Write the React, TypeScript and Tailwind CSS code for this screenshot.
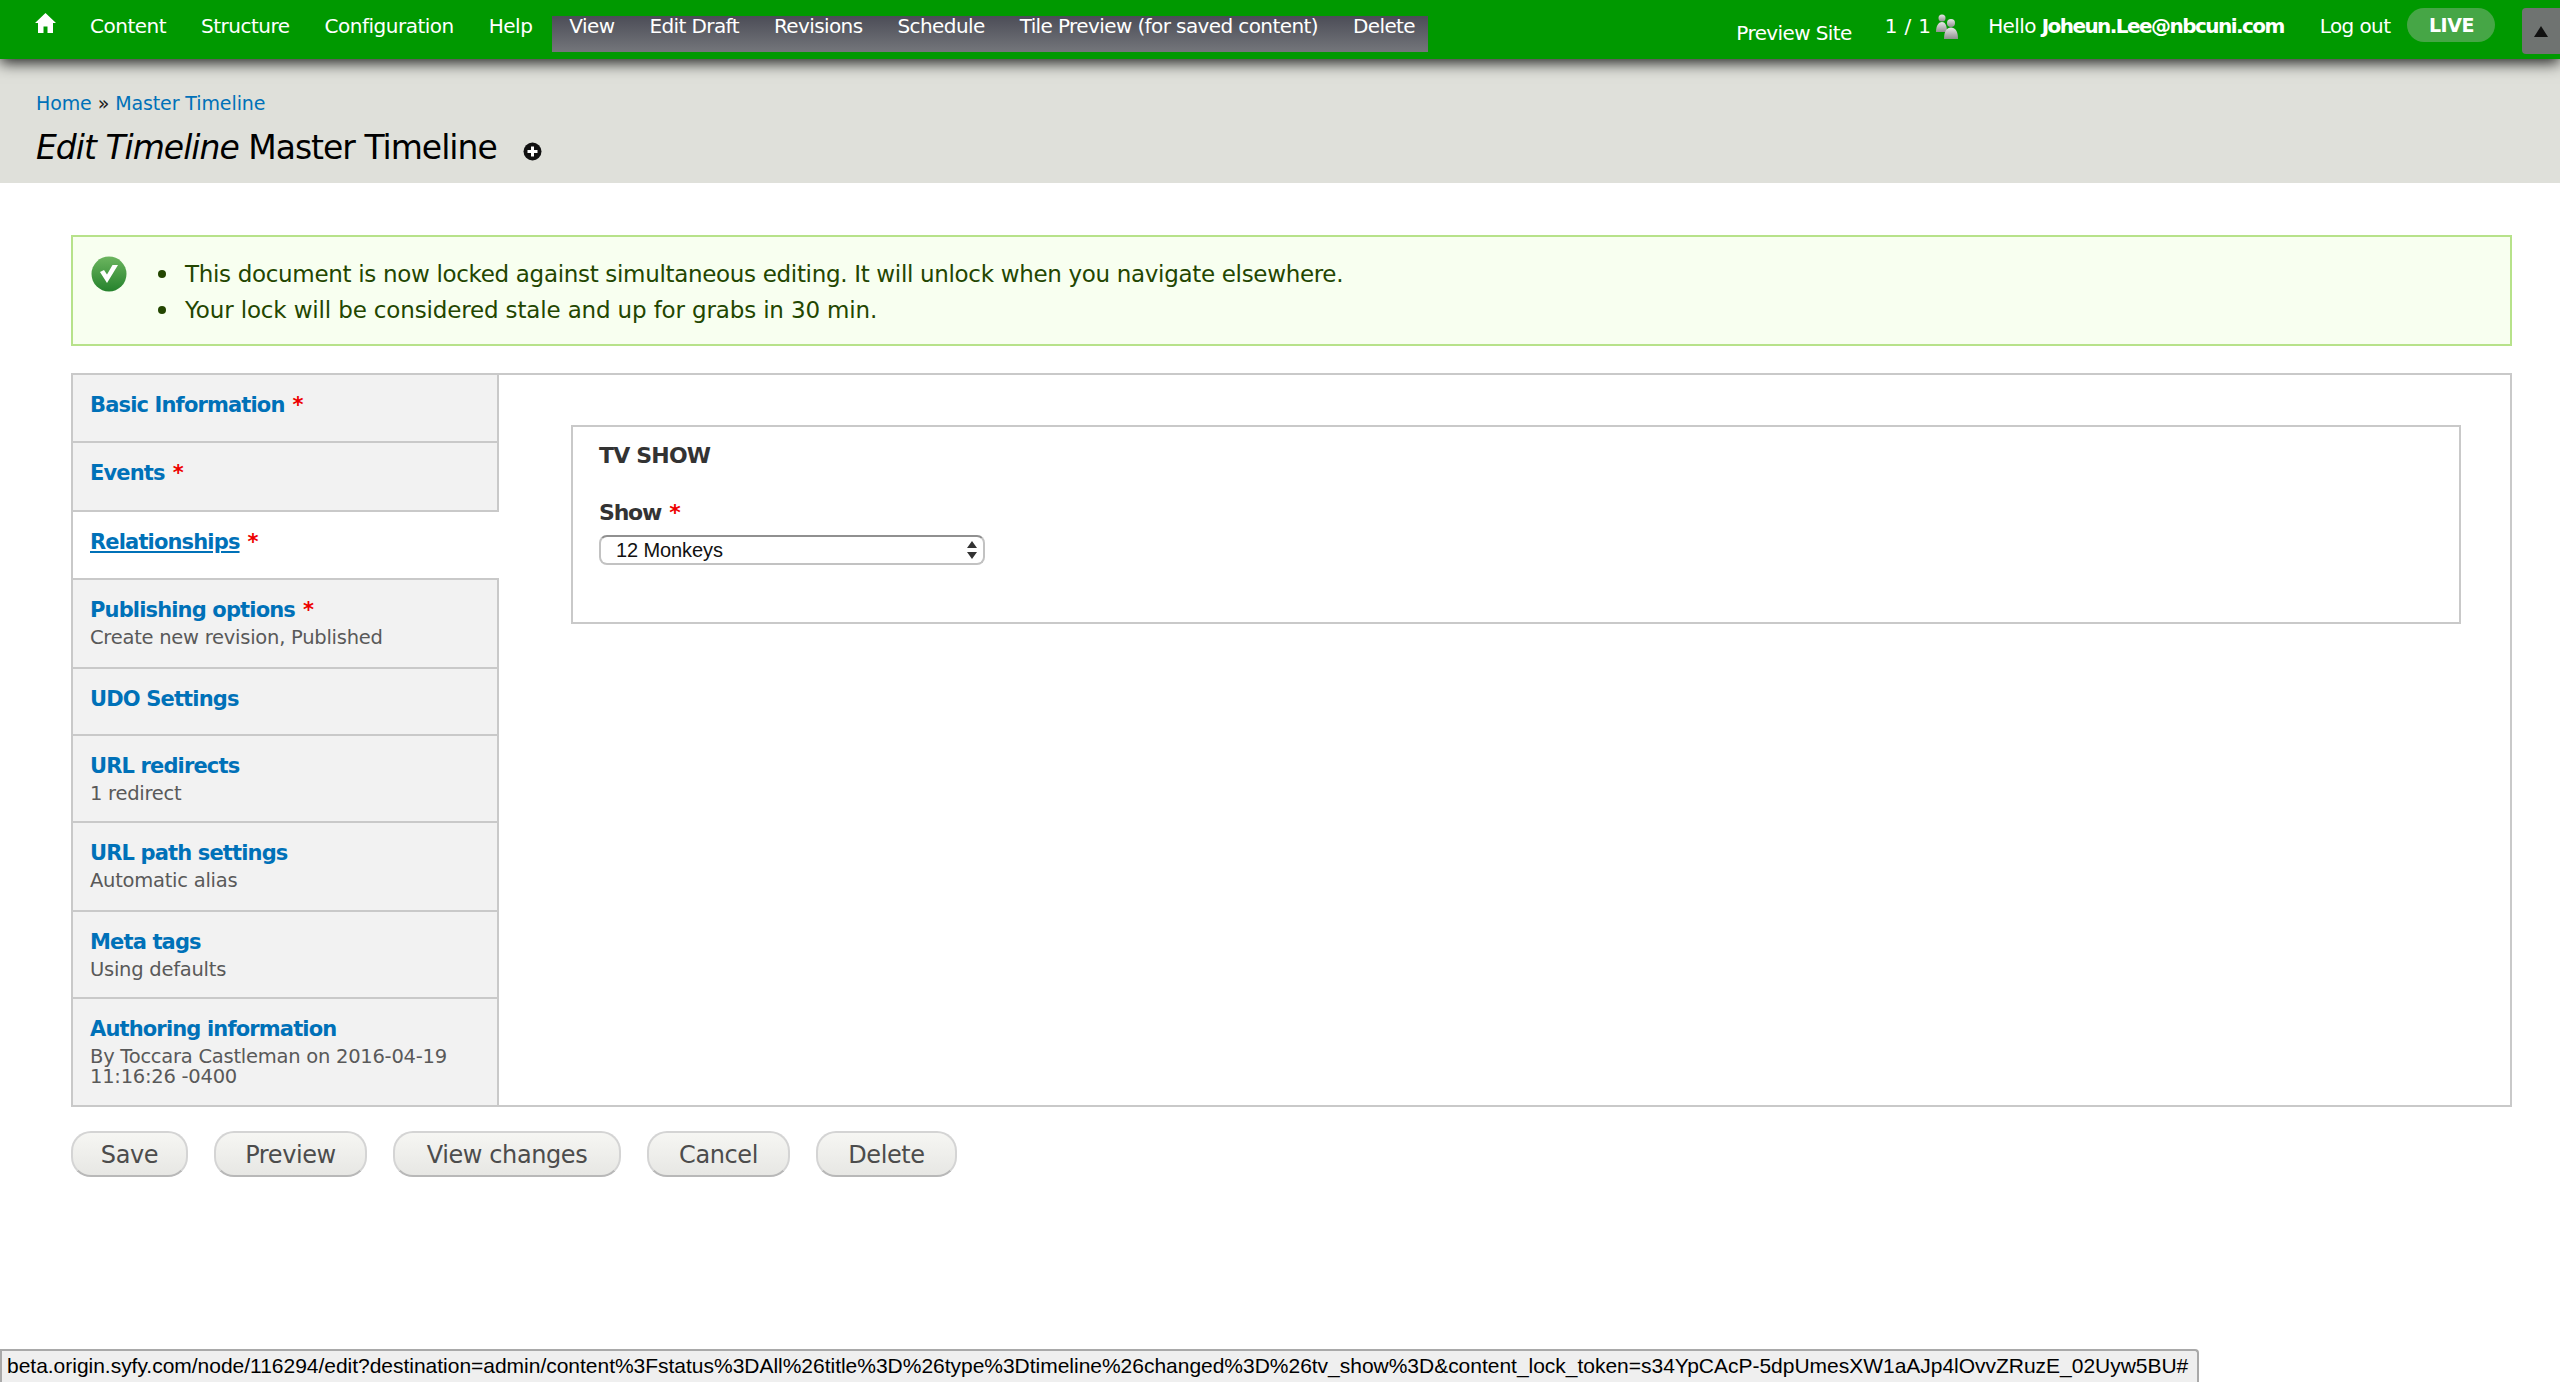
import { ReactNode } from 'react';

const lucida = 'font-["DejaVu_Sans",sans-serif]';

const adminLinks = ['Content', 'Structure', 'Configuration', 'Help'];
const localLinks = ['View', 'Edit Draft', 'Revisions', 'Schedule', 'Tile Preview (for saved content)', 'Delete'];

const tabs = [
  { title: 'Basic Information', required: true, h: 'h-[68px]' },
  { title: 'Events', required: true, h: 'h-[69px]' },
  { title: 'Relationships', required: true, active: true, h: 'h-[68px]' },
  { title: 'Publishing options', required: true, summary: 'Create new revision, Published', h: 'h-[89px]' },
  { title: 'UDO Settings', h: 'h-[67px]' },
  { title: 'URL redirects', summary: '1 redirect', h: 'h-[87px]' },
  { title: 'URL path settings', summary: 'Automatic alias', h: 'h-[89px]' },
  { title: 'Meta tags', summary: 'Using defaults', h: 'h-[87px]' },
  { title: 'Authoring information', summary: 'By Toccara Castleman on 2016-04-19 11:16:26 -0400', h: 'flex-1' },
];

const actions = [
  { label: 'Save', w: 'w-[117px]' },
  { label: 'Preview', w: 'w-[153px]' },
  { label: 'View changes', w: 'w-[228px]' },
  { label: 'Cancel', w: 'w-[143px]' },
  { label: 'Delete', w: 'w-[141px]' },
];

function Star() {
  return <span className="ml-[8px] font-bold text-[#ee0000]">*</span>;
}

function HomeIcon() {
  return (
    <svg width="21" height="22" viewBox="0 0 21 22" fill="#fff">
      <path d="M10.5 1 L21 11 H18 V21 H12.5 V14.5 H8.5 V21 H3 V11 H0 Z" />
    </svg>
  );
}

function PeopleIcon() {
  return (
    <svg width="26" height="26" viewBox="0 0 26 26">
      <defs>
        <linearGradient id="pg" x1="0" y1="0" x2="0" y2="1">
          <stop offset="0" stopColor="#e8e8e8" />
          <stop offset="1" stopColor="#8f8f8f" />
        </linearGradient>
      </defs>
      <circle cx="8" cy="5" r="3.5" fill="url(#pg)" />
      <path d="M2 19 C2 12 5 9 8 9 C11 9 13 12 13 19 Z" fill="url(#pg)" />
      <circle cx="17" cy="10" r="4" fill="url(#pg)" />
      <path d="M10 26 C10 18 13 14.5 17 14.5 C21 14.5 24 18 24 26 Z" fill="url(#pg)" />
    </svg>
  );
}

function CheckIcon() {
  return (
    <svg width="36" height="36" viewBox="0 0 36 36">
      <defs>
        <linearGradient id="cg" x1="0" y1="0" x2="0" y2="1">
          <stop offset="0" stopColor="#6cb55f" />
          <stop offset="1" stopColor="#25822c" />
        </linearGradient>
      </defs>
      <circle cx="18" cy="18" r="17.5" fill="url(#cg)" />
      <path d="M9 16 L16 27 L27 9 L21.5 9 L16 18.5 L13 14 Z" fill="#fff" />
    </svg>
  );
}

function PlusIcon() {
  return (
    <svg width="19" height="19" viewBox="0 0 19 19">
      <circle cx="9.5" cy="9.5" r="9" fill="#111" />
      <path d="M8 4.5 H11 V8 H14.5 V11 H11 V14.5 H8 V11 H4.5 V8 H8 Z" fill="#fff" />
    </svg>
  );
}

function NavText({ children }: { children: ReactNode }) {
  return <a className="whitespace-nowrap text-white">{children}</a>;
}

function Toolbar() {
  return (
    <div className={`${lucida} relative z-10 flex h-[59px] shrink-0 items-start bg-[#009900] text-[20px] tracking-[-0.6px] shadow-[0_4px_14px_rgba(0,0,0,0.85)]`}>
      <div className="ml-[35px] mt-[12px] shrink-0"><HomeIcon /></div>
      <div className="ml-[34px] mt-[13px] flex gap-[35px] leading-[26px] tracking-[-0.5px]">
        {adminLinks.map((l) => <NavText key={l}>{l}</NavText>)}
      </div>
      <div className="ml-[20px] mt-[16px] flex h-[36px] w-[876px] items-start gap-[35px] bg-gradient-to-b from-[#4c4d57] to-[#74767b] pl-[17px] leading-[20px]">
        {localLinks.map((l) => <NavText key={l}>{l}</NavText>)}
      </div>
      <div className="ml-[308px] mt-[20px] leading-[26px]"><NavText>Preview Site</NavText></div>
      <div className="ml-[33px] mt-[13px] flex leading-[26px] text-white">
        <span className="whitespace-nowrap tracking-[0.3px]">1 / 1</span>
        <span className="ml-[3px]"><PeopleIcon /></span>
      </div>
      <div className="ml-[28px] mt-[13px] whitespace-nowrap leading-[26px] text-white">
        Hello <strong className="font-bold tracking-[-1.55px]">Joheun.Lee@nbcuni.com</strong>
      </div>
      <div className="ml-[36px] mt-[13px] leading-[26px]"><NavText>Log out</NavText></div>
      <div className="ml-[17px] mt-[8px] flex h-[34px] w-[88px] items-center justify-center rounded-full bg-[#46a646] text-[19px] font-bold tracking-[-0.5px] text-white">LIVE</div>
      <div className="ml-auto mt-[8px] flex h-[46px] w-[38px] items-center justify-center rounded-tl-[4px] rounded-bl-[4px] bg-[#6f7371]">
        <svg width="14" height="11" viewBox="0 0 14 11"><path d="M7 0 L14 11 H0 Z" fill="#111" /></svg>
      </div>
    </div>
  );
}

function PageHeader() {
  return (
    <div className="relative h-[124px] shrink-0 bg-[#dfe0da] pl-[36px] pt-[31px]">
      <div className={`${lucida} text-[19px] leading-[26px] tracking-[-0.1px] text-[#222]`}>
        <a className="text-[#0071b8]">Home</a> » <a className="text-[#0071b8]">Master Timeline</a>
      </div>
      <div className={`${lucida} mt-[10px] flex items-center text-[33px] leading-[44px] tracking-[-1px] text-black`}>
        <h1 className="whitespace-nowrap font-normal"><em>Edit Timeline</em> Master Timeline</h1>
        <span className="ml-[26px] mt-[6px]"><PlusIcon /></span>
      </div>
    </div>
  );
}

function Message() {
  return (
    <div className={`${lucida} flex h-[111px] border-2 border-[#b7e28a] bg-[#f8fff0] pl-[18px] pt-[19px] text-[23px] leading-[36px] text-[#234600]`}>
      <div className="shrink-0"><CheckIcon /></div>
      <ul className="ml-[31px]">
        <li className="flex items-center whitespace-nowrap tracking-[-0.32px]"><span className="mr-[19px] size-[8px] rounded-full bg-[#234600]" />This document is now locked against simultaneous editing. It will unlock when you navigate elsewhere.</li>
        <li className="flex items-center whitespace-nowrap tracking-[-0.15px]"><span className="mr-[19px] size-[8px] rounded-full bg-[#234600]" />Your lock will be considered stale and up for grabs in 30 min.</li>
      </ul>
    </div>
  );
}

function VerticalTabs() {
  return (
    <div className="flex w-[426px] shrink-0 flex-col">
      {tabs.map((t) => (
        <div
          key={t.title}
          className={`${t.h} border-b-2 border-[#c9c9c9] pl-[17px] pr-[20px] pt-[15px] last:border-b-0 ${t.active ? 'bg-white' : 'border-r-2 bg-[#f2f2f2]'}`}
        >
          <div className="text-[21px] font-bold leading-[30px] tracking-[-0.85px] text-[#0071b8]">
            <span className={t.active ? 'underline' : ''}>{t.title}</span>
            {t.required && <Star />}
          </div>
          {t.summary && (
            <div className="pt-[3px] text-[19.5px] leading-[20px] tracking-[-0.25px] text-[#595959]">{t.summary}</div>
          )}
        </div>
      ))}
    </div>
  );
}

function TvShowFieldset() {
  return (
    <div className="ml-[72px] mr-[49px] mt-[50px] h-[199px] flex-1 border-2 border-[#c9c9c9] px-[26px] pt-[14px]">
      <div className="text-[22px] font-bold leading-[30px] tracking-[-0.8px] text-[#333]">TV SHOW</div>
      <div className="mt-[27px] text-[22px] font-bold leading-[30px] tracking-[-1.2px] text-[#333]">
        Show<Star />
      </div>
      <div className="mt-[7px] flex h-[30px] w-[386px] items-center justify-between rounded-[8px] border-2 border-[#c2c2c2] border-t-[#909090] bg-white pl-[15px] pr-[6px]">
        <span className="font-['Liberation_Sans',sans-serif] text-[20px] tracking-[-0.1px] text-[#111]">12 Monkeys</span>
        <svg width="10" height="18" viewBox="0 0 10 18" fill="#333">
          <path d="M5 0 L10 7 H0 Z M0 11 H10 L5 18 Z" />
        </svg>
      </div>
    </div>
  );
}

function ActionButtons() {
  return (
    <div className="mt-[24px] flex gap-[26px]">
      {actions.map((a) => (
        <button
          key={a.label}
          className={`${a.w} h-[46px] rounded-[20px] border-2 border-[#d4d4d4] border-b-[#b8b8b8] bg-gradient-to-b from-[#f6f6f3] to-[#e7e7e4] pt-[2px] text-[24px] leading-none tracking-[-0.4px] text-[#4c4c4c]`}
        >
          {a.label}
        </button>
      ))}
    </div>
  );
}

export default function App() {
  return (
    <div className="relative flex h-[1382px] w-[2560px] flex-col overflow-hidden bg-white">
      <Toolbar />
      <PageHeader />
      <div className={`${lucida} flex flex-1 flex-col pl-[71px] pr-[48px] pt-[52px]`}>
        <Message />
        <div className="mt-[27px] flex h-[734px] border-2 border-[#c9c9c9] bg-white">
          <VerticalTabs />
          <TvShowFieldset />
        </div>
        <ActionButtons />
      </div>
      <div className="absolute bottom-0 left-0 flex h-[33px] w-[2199px] items-center rounded-tr-[4px] border-2 border-b-0 border-[#a9a9a9] bg-[#efefef] pl-[5px] pb-[2px] font-['Liberation_Sans',sans-serif] text-[21px] tracking-[-0.02px] whitespace-nowrap text-black">
        beta.origin.syfy.com/node/116294/edit?destination=admin/content%3Fstatus%3DAll%26title%3D%26type%3Dtimeline%26changed%3D%26tv_show%3D&amp;content_lock_token=s34YpCAcP-5dpUmesXW1aAJp4lOvvZRuzE_02Uyw5BU#
      </div>
    </div>
  );
}
